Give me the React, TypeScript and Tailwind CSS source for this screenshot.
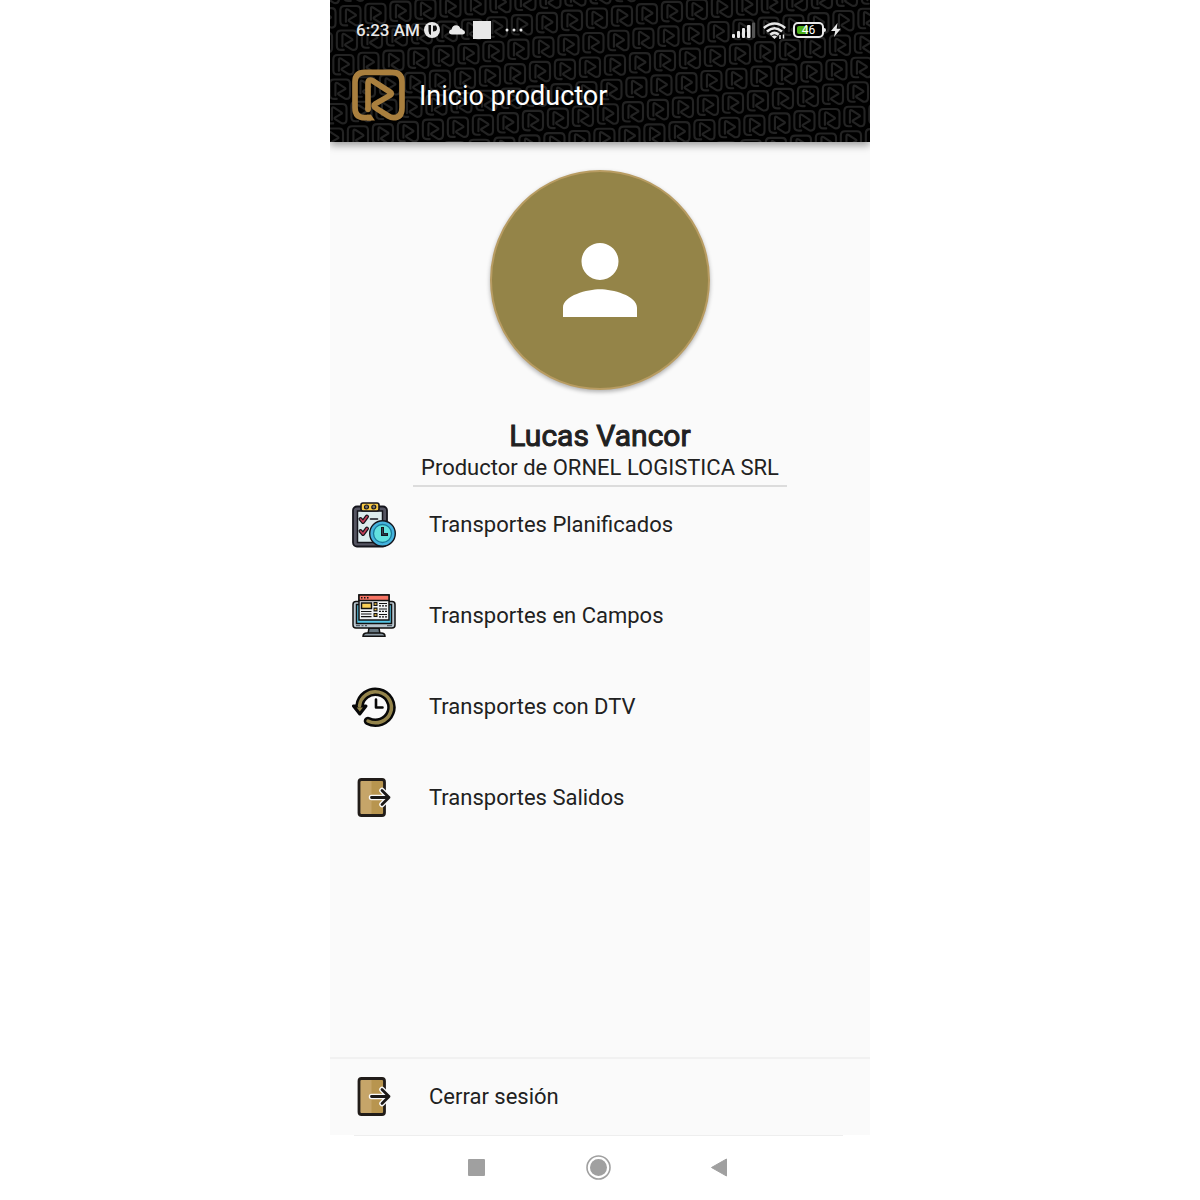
import React from 'react';

const LOGO_PATH =
  'M78 173 H60 Q30 173 30 143 V66 Q30 37 60 37 H142 Q171 37 171 66 V143 Q171 173 145 173 Q138 173 130 168 L94 145 Q82 138 92 131 L135 106 Q143 101 135 96 L84 63 Q69 54 69 72 V148';

function Logo() {
  return (
    <svg viewBox="18 24 168 168" className="size-14 shrink-0" role="img" aria-label="Logo">
      <path d={LOGO_PATH} fill="none" stroke="#a97f3e" strokeWidth="17" strokeLinejoin="round" />
      <circle cx="69" cy="148" r="8.5" fill="#a97f3e" />
      <path d="M66 164.500 L78 164.500 L90 181.500 H66Z" fill="#a97f3e" />
    </svg>
  );
}

function HeaderTexture() {
  const tiles: { x: number; y: number }[] = [];
  for (let row = -4; row <= 8; row++) {
    for (let col = -14; col <= 14; col++) {
      const x = 285 + 25 * col - 3.5 * row;
      const y = 65 - 2.2 * col + 24.5 * row;
      if (x > -20 && x < 560 && y > -20 && y < 162) tiles.push({ x, y });
    }
  }
  return (
    <svg
      viewBox="0 0 540 142"
      preserveAspectRatio="xMidYMid slice"
      className="absolute inset-0 size-full"
      aria-hidden="true"
    >
      <defs>
        <path id="tile" d={LOGO_PATH} fill="none" stroke="#232323" strokeWidth="15" strokeLinejoin="round" strokeLinecap="round" />
      </defs>
      {tiles.map((t) => (
        <use key={`${t.x},${t.y}`} href="#tile" transform={`translate(${t.x} ${t.y}) scale(0.143) translate(-101 -105)`} />
      ))}
    </svg>
  );
}

function StatusBar() {
  return (
    <div className="relative flex h-5 items-center justify-between pl-[5px] pr-2 text-[#e8e8e8]">
      <div className="flex items-center">
        <span className="text-[17px] leading-5 font-medium">6:23 AM</span>
        <svg viewBox="0 0 16 16" className="ml-1 size-4" aria-hidden="true">
          <circle cx="8" cy="8" r="8" fill="#e8e8e8" />
          <path d="M4.500 3 H7 V13 Q4.500 12 4.500 9Z M9 3 Q10 5 11 3 Q13.500 4.500 13 7 Q12.500 9.500 9 9.500Z" fill="#111" />
        </svg>
        <svg viewBox="0 0 16 10" className="ml-[9px] h-[10px] w-4" aria-hidden="true">
          <path d="M3 9.5 Q0 9.3 0 7 Q0 4.6 2.5 4.5 Q3.5 .3 7 .3 Q10.4 .3 11.3 3.6 Q13 3.2 13.8 5 Q16 5.3 16 7.4 Q16 9.5 13.5 9.5Z" fill="#e8e8e8" />
        </svg>
        <span className="ml-2 size-[18px] bg-[#e8e8e8]" />
        <svg viewBox="0 0 18 4" className="ml-[14px] h-1 w-[18px]" aria-hidden="true">
          <g fill="#e8e8e8">
            <circle cx="2" cy="2" r="1.5" />
            <circle cx="9" cy="2" r="1.5" />
            <circle cx="16" cy="2" r="1.5" />
          </g>
        </svg>
      </div>
      <div className="flex items-center">
        <svg viewBox="0 0 24 16" className="h-4 w-6" aria-hidden="true">
          <g fill="#e8e8e8">
            <rect x="0" y="12" width="3" height="4" rx="1" />
            <rect x="5" y="9" width="3" height="7" rx="1" />
            <rect x="10" y="6" width="3" height="10" rx="1" />
            <rect x="15" y="3" width="3.5" height="13" rx="1" />
            <rect x="20" y="0.5" width="3.2" height="15.5" rx="1" fill="#555" />
          </g>
        </svg>
        <svg viewBox="0 0 23 17" className="ml-[7px] h-[17px] w-[23px]" aria-hidden="true">
          <g fill="none" stroke="#e8e8e8" strokeWidth="2.500">
            <path d="M.8 6 Q11.500 -3 22.200 6" />
            <path d="M4 9.500 Q11.500 3 19 9.500" />
            <path d="M7.300 12.800 Q11.500 9 15.700 12.800" />
          </g>
          <path d="M11.500 17 L8.800 14.500 Q11.500 12.700 14 14.500Z" fill="#e8e8e8" />
          <path d="M17 13 V17 M20.500 12.500 V16.500" stroke="#e8e8e8" strokeWidth="1.500" />
        </svg>
        <div className="ml-[7px] flex items-center">
          <div className="relative flex h-4 w-[31px] items-center justify-center overflow-hidden rounded-[5px] border-2 border-[#e8e8e8] bg-black">
            <span className="absolute top-[2px] bottom-[2px] left-[2px] w-[11px] rounded-l-[2px] bg-[#4caf1a]" />
            <span className="relative text-[12px] leading-3 text-white">46</span>
          </div>
          <span className="h-1 w-[2px] rounded-r bg-[#e8e8e8]" />
        </div>
        <svg viewBox="0 0 10 14" className="ml-[5px] h-[14px] w-[10px]" aria-hidden="true">
          <path d="M6.500 0 L0 8 H4.200 L3 14 L9.800 5.800 H5.700Z" fill="#e8e8e8" />
        </svg>
      </div>
    </div>
  );
}

function PlannedIcon() {
  return (
    <svg viewBox="0 0 44 46" className="h-[46px] w-11" aria-hidden="true">
      <rect x="1" y="4.500" width="34" height="40" rx="4" fill="#555562" stroke="#15151c" strokeWidth="1.800" />
      <rect x="5.500" y="9" width="25" height="31.500" fill="#dcebee" stroke="#15151c" strokeWidth="1.500" />
      <rect x="9" y="1" width="18" height="8" rx="2" fill="#f8c944" stroke="#15151c" strokeWidth="1.600" />
      <circle cx="14.500" cy="5" r="2" fill="#77736a" stroke="#15151c" strokeWidth="1.200" />
      <circle cx="21.800" cy="5" r="2" fill="#77736a" stroke="#15151c" strokeWidth="1.200" />
      <g fill="none" strokeLinecap="round" strokeLinejoin="round">
        <path d="M8.500 17 L11 20 L15 14.500 M8.500 29 L11 32 L15 26.500" stroke="#15151c" strokeWidth="4" />
        <path d="M8.500 17 L11 20 L15 14.500 M8.500 29 L11 32 L15 26.500" stroke="#c53d59" strokeWidth="1.600" />
        <path d="M18.500 17 H25.500" stroke="#15151c" strokeWidth="1.600" />
      </g>
      <circle cx="30.500" cy="31.500" r="12.800" fill="#45b3de" stroke="#15151c" strokeWidth="1.400" />
      <circle cx="30.500" cy="31.500" r="9" fill="#62e2df" stroke="#197a99" strokeWidth="1.300" />
      <path d="M30.500 25 V32.500 H36" fill="none" stroke="#15151c" strokeWidth="3" />
      <path d="M30.500 26 V32.200 H35" fill="none" stroke="#375866" strokeWidth=".8" />
    </svg>
  );
}

function FieldsIcon() {
  return (
    <svg viewBox="0 0 44 46" className="h-[46px] w-11" aria-hidden="true">
      <g stroke="#111" strokeWidth="1.500">
        <path d="M17 35 H27 L28 41 H16Z" fill="#687882" />
        <path d="M11 43.300 Q11 40 15 40 H29 Q33 40 33 43.300Z" fill="#8b99a3" />
        <rect x="1" y="8.500" width="42" height="26.500" rx="3" fill="#b9c6cf" />
        <rect x="4.500" y="11.500" width="35" height="19" fill="#56c7e8" />
        <rect x="7" y="2" width="30" height="25" fill="#f1f3f4" />
        <rect x="7" y="2" width="30" height="5.500" fill="#f77464" />
        <rect x="9.500" y="10" width="10" height="5.500" fill="#f9cf57" />
      </g>
      <g fill="#111">
        <rect x="9" y="4" width="1.500" height="1.500" />
        <rect x="12" y="4" width="1.500" height="1.500" />
        <rect x="15" y="4" width="1.500" height="1.500" />
        <rect x="21.500" y="9" width="4" height="4" />
        <rect x="21.500" y="14.500" width="4" height="4" />
        <rect x="21.500" y="20" width="4" height="4" />
      </g>
      <path d="M22.500 11 h2 M22.500 16.500 h2 M22.500 22 h2" stroke="#f4c13d" strokeWidth="1.500" />
      <path d="M27 10.500 H35 M27 16 H35 M27 21.500 H35" stroke="#111" strokeWidth="1.200" />
      <path d="M27 12.800 H35 M27 18.300 H35 M27 23.800 H35" stroke="#111" strokeWidth="1.200" strokeDasharray="2 1" />
      <path d="M9 18.500 H19.500 M9 21 H19.500 M9 23.700 H19.500" stroke="#111" strokeWidth="1.200" />
      <path d="M4 32.700 h4 M9.500 32.700 h2 M13 32.700 h2 M35 32.700 h5" stroke="#34404a" strokeWidth="1" />
    </svg>
  );
}

function HistoryIcon() {
  const arc = 'M7.500 22 A16 15.500 0 1 1 16 37';
  return (
    <svg viewBox="0 0 44 46" className="h-[46px] w-11" aria-hidden="true">
      <path d={arc} fill="none" stroke="#080808" strokeWidth="8.500" strokeLinecap="round" />
      <path d="M1.500 22 H14 L7.800 30Z" fill="#94844b" stroke="#080808" strokeWidth="3" strokeLinejoin="round" />
      <path d={arc} fill="none" stroke="#94844b" strokeWidth="3.500" strokeLinecap="round" />
      <path d="M24 15.500 V23.500 H30.500" fill="none" stroke="#080808" strokeWidth="2.600" strokeLinecap="round" strokeLinejoin="round" />
    </svg>
  );
}

function DoorIcon() {
  return (
    <svg viewBox="0 0 44 46" className="h-[46px] w-11" aria-hidden="true">
      <rect x="7" y="4.500" width="25.500" height="36" rx="2.500" fill="#c6a569" />
      <path d="M19.500 4.500 H32.500 V40.500 H19.500Z" fill="#b8954f" />
      <rect x="7" y="4.500" width="25.500" height="36" rx="2.500" fill="none" stroke="#211c19" strokeWidth="2.800" />
      <g fill="none" strokeLinecap="round" strokeLinejoin="round">
        <path d="M19.500 22.500 H37 M30 15.500 L37 22.500 L30 29.500" stroke="#fafafa" strokeWidth="5.500" />
        <path d="M19.500 22.500 H37 M30 15.500 L37 22.500 L30 29.500" stroke="#1c1917" strokeWidth="2.800" />
      </g>
    </svg>
  );
}

function MenuItem({ icon, label }: { icon: React.ReactNode; label: string }) {
  return (
    <button type="button" className="flex w-full items-center gap-[33px] px-[22px] text-left text-[22px] leading-7">
      {icon}
      <span>{label}</span>
    </button>
  );
}

export default function App() {
  return (
    <div className="min-h-screen bg-white font-['Roboto',sans-serif] text-[#212121]">
      <div className="mx-auto flex min-h-screen max-w-[540px] flex-col">
        <div className="flex grow flex-col bg-[#fafafa]">
          <header className="relative bg-black px-[21px] pt-5 pb-[18px] shadow-[0_3px_8px_rgba(0,0,0,0.4)] [clip-path:inset(0_0_-16px_0)]">
            <HeaderTexture />
            <StatusBar />
            <div className="relative mt-7 flex items-center gap-3">
              <Logo />
              <h1 className="text-[27px] leading-8 text-white">Inicio productor</h1>
            </div>
          </header>

          <main className="flex grow flex-col">
            <section className="flex flex-col items-center pt-7">
              <div className="flex size-[220px] items-center justify-center rounded-full border-2 border-[#b89c62] bg-[#948448] shadow-[0_2px_4px_rgba(0,0,0,0.3)]">
                <svg viewBox="4 4 16 16" className="size-[74px]" role="img" aria-label="Foto de perfil">
                  <path
                    d="M12 12c2.210 0 4-1.790 4-4s-1.790-4-4-4-4 1.790-4 4 1.790 4 4 4zm0 2c-2.670 0-8 1.340-8 4v2h16v-2c0-2.660-5.330-4-8-4z"
                    fill="#fff"
                  />
                </svg>
              </div>
              <h2 className="mt-7 text-[30px] leading-9 font-normal [-webkit-text-stroke:1px_#212121]">Lucas Vancor</h2>
              <div className="border-b-2 border-[#dcdcdc] px-2 pb-1">
                <p className="text-[22px] leading-[27px]">Productor de ORNEL LOGISTICA SRL</p>
              </div>
            </section>
            <nav className="mt-[15px] flex flex-col gap-[45px]">
              <MenuItem icon={<PlannedIcon />} label="Transportes Planificados" />
              <MenuItem icon={<FieldsIcon />} label="Transportes en Campos" />
              <MenuItem icon={<HistoryIcon />} label="Transportes con DTV" />
              <MenuItem icon={<DoorIcon />} label="Transportes Salidos" />
            </nav>
          </main>

          <footer className="border-t-2 border-[#f1f1f1] py-[15px]">
            <MenuItem icon={<DoorIcon />} label="Cerrar sesión" />
          </footer>
        </div>

        <div className="bg-white pr-[27px] pl-6">
          <div className="flex h-[65px] items-center justify-center gap-[97px] border-t border-[#eeeeee] pb-[2px]">
            <button type="button" aria-label="Recientes" className="flex">
              <svg viewBox="0 0 25 25" className="size-[25px]">
                <rect x="4" y="4" width="17" height="17" rx="1" fill="#a0a0a0" />
              </svg>
            </button>
            <button type="button" aria-label="Inicio" className="flex">
              <svg viewBox="0 0 25 25" className="size-[25px]">
                <circle cx="12.500" cy="12.500" r="11.500" fill="none" stroke="#a0a0a0" strokeWidth="1.600" />
                <circle cx="12.500" cy="12.500" r="8.500" fill="#a0a0a0" />
              </svg>
            </button>
            <button type="button" aria-label="Atrás" className="flex">
              <svg viewBox="0 0 25 25" className="size-[25px]">
                <path d="M3.500 12.500 L18.500 4 V21Z" fill="#a0a0a0" stroke="#a0a0a0" strokeWidth="1" strokeLinejoin="round" />
              </svg>
            </button>
          </div>
        </div>
      </div>
    </div>
  );
}
